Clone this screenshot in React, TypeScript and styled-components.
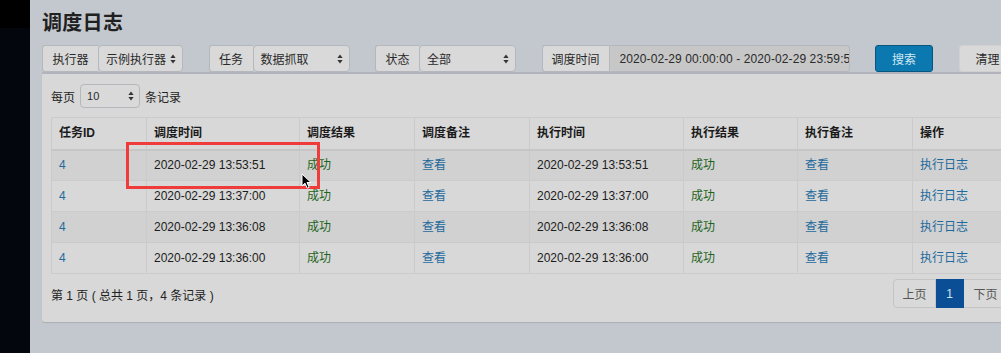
import React from "react"
import styled, { createGlobalStyle, css } from "styled-components"

const GlobalStyle = createGlobalStyle`
  html, body {
    margin: 0;
    padding: 0;
    background: #c3c7ce;
  }
  body {
    font-family: "Liberation Sans", "Noto Sans CJK SC", sans-serif;
    font-size: 12px;
    color: #1c1c1c;
  }
`

const Page = styled.div`
  position: relative;
  display: flex;
  width: 1001px;
  height: 353px;
  overflow: hidden;
`

const Sidebar = styled.div`
  flex: 0 0 30px;
  background: #03060d;
  border-top: 28px solid #000;
`

const Content = styled.div`
  flex: 1;
  min-width: 0;
  padding-left: 12px;
  background: #c3c7ce;
  overflow: hidden;
`

const Title = styled.h1`
  margin: 0;
  padding-top: 10px;
  font-size: 20px;
  line-height: 24px;
  font-weight: 700;
  color: #202020;
  font-family: "Noto Sans CJK SC", sans-serif;
  letter-spacing: 0.3px;
`

const FilterRow = styled.div`
  display: flex;
  gap: 25.5px;
  margin-top: 11px;
  height: 27px;
  width: 1000px;
`

const Group = styled.div`
  display: flex;
  height: 27px;
`

const Addon = styled.div<{ $w: number }>`
  width: ${({ $w }) => $w}px;
  box-sizing: border-box;
  display: flex;
  align-items: center;
  justify-content: center;
  background: #d9d9d9;
  border: 1px solid #b4b7bc;
  border-right: none;
  border-radius: 3px 0 0 3px;
  font-family: "Noto Sans CJK SC", sans-serif;
  color: #2a2a2a;
`

const fieldBox = css`
  box-sizing: border-box;
  display: flex;
  align-items: center;
  border: 1px solid #b4b7bc;
  border-radius: 4px;
  color: #2a2a2a;
`

const Select = styled.div<{ $w: number }>`
  ${fieldBox}
  width: ${({ $w }) => $w}px;
  justify-content: space-between;
  padding: 0 6px 0 7px;
  background: #d9d9d9;
  font-family: "Noto Sans CJK SC", sans-serif;
`

const DateInput = styled.div`
  ${fieldBox}
  width: 241px;
  padding-left: 10px;
  border-radius: 0 3px 3px 0;
  background: #c7c7c7;
  white-space: nowrap;
  overflow: hidden;
  font-size: 12px;
  letter-spacing: 0.1px;
`

const Button = styled.div<{ $primary?: boolean; $w: number }>`
  box-sizing: border-box;
  width: ${({ $w }) => $w}px;
  height: 27px;
  display: flex;
  align-items: center;
  justify-content: center;
  border-radius: 3px;
  font-family: "Noto Sans CJK SC", sans-serif;
  background: ${({ $primary }) => ($primary ? "#0b78b0" : "#d9d9d9")};
  border: 1px solid ${({ $primary }) => ($primary ? "#06577f" : "#d0d0d0")};
  color: ${({ $primary }) => ($primary ? "#d3e8f3" : "#2a2a2a")};
`

const Box = styled.div`
  width: 990px;
  height: 250px;
  box-sizing: border-box;
  background: #d8d8d8;
  border-top: 2px solid #b1b5bb;
  border-radius: 0 0 3px 3px;
  box-shadow: 0 1px 1px rgba(0, 0, 0, 0.12);
  padding: 10px 9px 0 9px;
`

const LengthRow = styled.div`
  display: flex;
  align-items: center;
  gap: 5px;
  height: 24px;
  font-family: "Noto Sans CJK SC", sans-serif;
  color: #222;
`

const SmallSelect = styled.div`
  ${fieldBox}
  width: 60px;
  height: 24px;
  justify-content: space-between;
  padding: 0 5px 0 6px;
  background: #d9d9d9;
  font-family: "Liberation Sans", sans-serif;
  font-size: 11px;
`

const Table = styled.table`
  margin-top: 9px;
  width: 990px;
  border-collapse: collapse;
  table-layout: fixed;
  border: 1px solid #cbcbcb;
`

const Th = styled.th<{ $w?: number }>`
  box-sizing: border-box;
  ${({ $w }) => ($w ? `width: ${$w}px;` : "")}
  height: 32px;
  padding: 0 7px;
  text-align: left;
  font-weight: 700;
  font-size: 12px;
  line-height: 14px;
  color: #1a1a1a;
  border-left: 1px solid #cbcbcb;
  border-bottom: 2px solid #c6c6c6;
  font-family: "Liberation Sans", "Noto Sans CJK SC", sans-serif;
`

const Tr = styled.tr<{ $odd: boolean }>`
  background: ${({ $odd }) => ($odd ? "#d1d1d1" : "#d8d8d8")};
`

const Td = styled.td<{ $tone?: "link" | "ok" }>`
  box-sizing: border-box;
  height: 31px;
  padding: 0 7px;
  line-height: 14px;
  border-left: 1px solid #cbcbcb;
  border-top: 1px solid #cbcbcb;
  white-space: nowrap;
  overflow: hidden;
  color: ${({ $tone }) =>
    $tone === "link" ? "#1f6a9c" : $tone === "ok" ? "#1f641c" : "#1c1c1c"};
  font-family: "Liberation Sans", "Noto Sans CJK SC", sans-serif;
`

const Footer = styled.div`
  display: flex;
  justify-content: space-between;
  align-items: center;
  margin-top: 5px;
  height: 29px;
`

const Info = styled.div`
  font-family: "Liberation Sans", "Noto Sans CJK SC", sans-serif;
  color: #222;
  padding-top: 2px;
`

const Pager = styled.div`
  display: flex;
  margin-right: 15px;
`

const PageItem = styled.div<{ $active?: boolean; $w: number; $first?: boolean }>`
  box-sizing: border-box;
  width: ${({ $w }) => $w}px;
  height: 29px;
  display: flex;
  align-items: center;
  justify-content: center;
  font-family: "Liberation Sans", "Noto Sans CJK SC", sans-serif;
  background: ${({ $active }) => ($active ? "#0a4f95" : "#d9d9d9")};
  color: ${({ $active }) => ($active ? "#d2e4f4" : "#555")};
  border: 1px solid ${({ $active }) => ($active ? "#0a4f95" : "#c4c4c4")};
  border-left-width: ${({ $first }) => ($first ? "1px" : "0")};
  border-radius: ${({ $first }) => ($first ? "4px 0 0 4px" : "0")};
`

const Highlight = styled.div`
  position: absolute;
  left: 126px;
  top: 142px;
  width: 194px;
  height: 47px;
  box-sizing: border-box;
  border: 3px solid #f03b3b;
  pointer-events: none;
`

const Cursor = styled.svg`
  position: absolute;
  left: 301px;
  top: 173px;
`

function Arrows() {
  return (
    <svg width="6" height="10" viewBox="0 0 6 10">
      <path d="M3 0.5 L5.6 4 L0.4 4 Z" fill="#333" />
      <path d="M3 9.5 L5.6 6 L0.4 6 Z" fill="#333" />
    </svg>
  )
}

const rows = [
  "2020-02-29 13:53:51",
  "2020-02-29 13:37:00",
  "2020-02-29 13:36:08",
  "2020-02-29 13:36:00",
]

export default function App() {
  return (
    <>
      <GlobalStyle />
      <Page>
        <Sidebar />
        <Content>
          <Title>调度日志</Title>
          <FilterRow>
            <Group>
              <Addon $w={56}>执行器</Addon>
              <Select $w={85}>
                示例执行器
                <Arrows />
              </Select>
            </Group>
            <Group>
              <Addon $w={44}>任务</Addon>
              <Select $w={97}>
                数据抓取
                <Arrows />
              </Select>
            </Group>
            <Group>
              <Addon $w={44}>状态</Addon>
              <Select $w={97}>
                全部
                <Arrows />
              </Select>
            </Group>
            <Group>
              <Addon $w={67}>调度时间</Addon>
              <DateInput>2020-02-29 00:00:00 - 2020-02-29 23:59:59</DateInput>
            </Group>
            <Button $primary $w={58}>
              搜索
            </Button>
            <Button $w={58}>清理</Button>
          </FilterRow>
          <Box>
            <LengthRow>
              每页
              <SmallSelect>
                10
                <Arrows />
              </SmallSelect>
              条记录
            </LengthRow>
            <Table>
              <thead>
                <tr>
                  <Th $w={95}>任务ID</Th>
                  <Th $w={153}>调度时间</Th>
                  <Th $w={115}>调度结果</Th>
                  <Th $w={115}>调度备注</Th>
                  <Th $w={154}>执行时间</Th>
                  <Th $w={114}>执行结果</Th>
                  <Th $w={115}>执行备注</Th>
                  <Th>操作</Th>
                </tr>
              </thead>
              <tbody>
                {rows.map((t, i) => (
                  <Tr key={t} $odd={i % 2 === 0}>
                    <Td $tone="link">4</Td>
                    <Td>{t}</Td>
                    <Td $tone="ok">成功</Td>
                    <Td $tone="link">查看</Td>
                    <Td>{t}</Td>
                    <Td $tone="ok">成功</Td>
                    <Td $tone="link">查看</Td>
                    <Td $tone="link">执行日志</Td>
                  </Tr>
                ))}
              </tbody>
            </Table>
            <Footer>
              <Info>第 1 页 ( 总共 1 页，4 条记录 )</Info>
              <Pager>
                <PageItem $first $w={43}>
                  上页
                </PageItem>
                <PageItem $active $w={28}>
                  1
                </PageItem>
                <PageItem $w={44}>下页</PageItem>
              </Pager>
            </Footer>
          </Box>
        </Content>
        <Highlight />
        <Cursor width="12" height="17" viewBox="0 0 12 17">
          <path
            d="M1 1 L1 13 L4 10.2 L6.2 15.2 L8.2 14.3 L6 9.5 L10 9.5 Z"
            fill="#000"
            stroke="#fff"
            strokeWidth="1"
          />
        </Cursor>
      </Page>
    </>
  )
}
